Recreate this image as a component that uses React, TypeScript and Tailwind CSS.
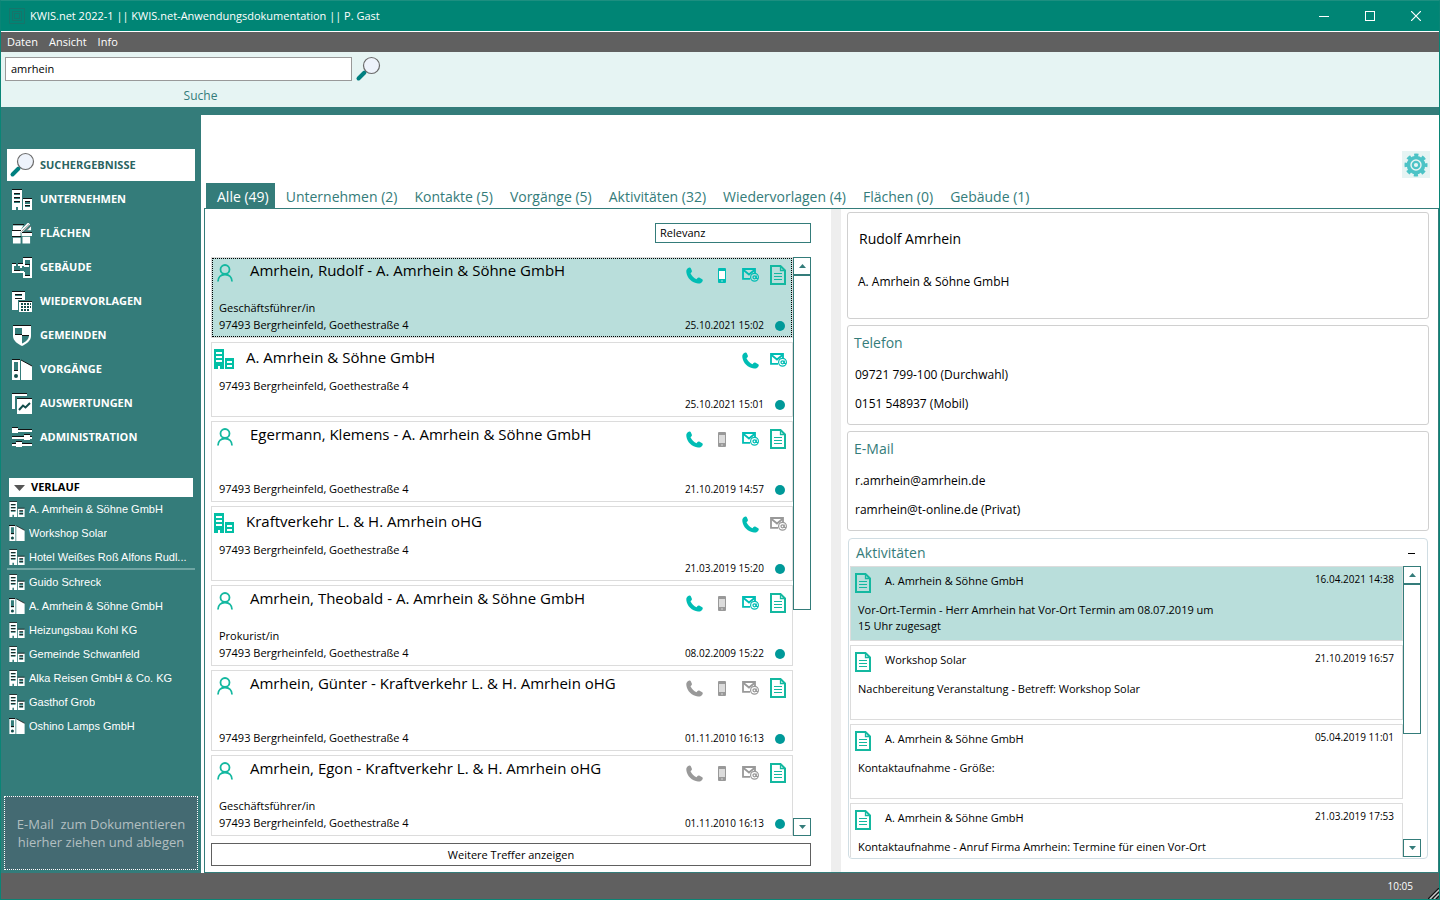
import { useState } from "react";
import type { ReactNode } from "react";

type IconProps = { className?: string };

type Hit = {
  id: number;
  kind: "person" | "company";
  title: string;
  role?: string;
  date: string;
  phone: boolean;
  mobile?: boolean;
  mail: boolean;
};

const address = "97493 Bergrheinfeld, Goethestraße 4";

const hits: Hit[] = [
  { id: 1, kind: "person", title: "Amrhein, Rudolf - A. Amrhein & Söhne GmbH", role: "Geschäftsführer/in", date: "25.10.2021 15:02", phone: true, mobile: true, mail: true },
  { id: 2, kind: "company", title: "A. Amrhein & Söhne GmbH", date: "25.10.2021 15:01", phone: true, mail: true },
  { id: 3, kind: "person", title: "Egermann, Klemens - A. Amrhein & Söhne GmbH", date: "21.10.2019 14:57", phone: true, mobile: false, mail: true },
  { id: 4, kind: "company", title: "Kraftverkehr L. & H. Amrhein oHG", date: "21.03.2019 15:20", phone: true, mail: false },
  { id: 5, kind: "person", title: "Amrhein, Theobald - A. Amrhein & Söhne GmbH", role: "Prokurist/in", date: "08.02.2009 15:22", phone: true, mobile: false, mail: true },
  { id: 6, kind: "person", title: "Amrhein, Günter - Kraftverkehr L. & H. Amrhein oHG", date: "01.11.2010 16:13", phone: false, mobile: false, mail: false },
  { id: 7, kind: "person", title: "Amrhein, Egon - Kraftverkehr L. & H. Amrhein oHG", role: "Geschäftsführer/in", date: "01.11.2010 16:13", phone: false, mobile: false, mail: false },
];

const activities = [
  { id: 1, company: "A. Amrhein & Söhne GmbH", date: "16.04.2021 14:38", text: "Vor-Ort-Termin - Herr Amrhein hat Vor-Ort Termin am 08.07.2019 um 15 Uhr zugesagt" },
  { id: 2, company: "Workshop Solar", date: "21.10.2019 16:57", text: "Nachbereitung Veranstaltung - Betreff: Workshop Solar" },
  { id: 3, company: "A. Amrhein & Söhne GmbH", date: "05.04.2019 11:01", text: "Kontaktaufnahme - Größe:" },
  { id: 4, company: "A. Amrhein & Söhne GmbH", date: "21.03.2019 17:53", text: "Kontaktaufnahme - Anruf Firma Amrhein: Termine für einen Vor-Ort" },
];

const tabs = [
  "Alle (49)",
  "Unternehmen (2)",
  "Kontakte (5)",
  "Vorgänge (5)",
  "Aktivitäten (32)",
  "Wiedervorlagen (4)",
  "Flächen (0)",
  "Gebäude (1)",
];

const MagnifierIcon = ({ className }: IconProps) => (
  <svg viewBox="0 0 26 26" className={className} aria-hidden="true">
    <path d="M3.5 22.5 9.5 16.5" stroke="#008080" strokeWidth="4" strokeLinecap="round" />
    <circle cx="16.5" cy="9.5" r="8" fill="#eef3fb" stroke="#6b6b6b" strokeWidth="1.2" />
  </svg>
);

const BuildingIcon = ({ className }: IconProps) => (
  <svg viewBox="0 0 20 21" className={className} aria-hidden="true">
    <path fill="#fff" fillRule="evenodd" d="M0 1H10V21H6V18H4V21H0ZM2 4V6H8V4ZM2 8V10H8V8ZM2 12V14H8V12ZM11 10H20V21H11ZM13 13V15H18V13ZM13 16V18H18V16Z" />
    <path fill="#111" d="M0 0H10V1H0ZM2 4H8V5H2ZM2 8H8V9H2ZM2 12H8V13H2ZM11 9H20V10H11ZM13 12H18V13H13ZM13 16H18V17H13Z" />
  </svg>
);

const AreaIcon = ({ className }: IconProps) => (
  <svg viewBox="0 0 21 21" className={className} aria-hidden="true">
    <path fill="#fff" d="M1 2H12L9 7H1ZM0 8H9V13H0ZM10 9H21V13H10ZM15 7 20 3V7ZM1 15H9V21H1ZM11 14H19V21H11Z" />
    <path stroke="#fff" strokeWidth="3" d="M9 9 18 0" />
    <path stroke="#777" d="M10 8.500 18 1M14 9 20 2.500" />
    <path fill="#111" shapeRendering="crispEdges" d="M1 1H13V2H1ZM0 7H9V8H0ZM11 9H21V10H11ZM0 13H9V14H0Z" />
  </svg>
);

const FloorPlanIcon = ({ className }: IconProps) => (
  <svg viewBox="0 0 20 21" className={className} shapeRendering="crispEdges" aria-hidden="true">
    <path fill="none" stroke="#fff" strokeWidth="2" d="M4 8H1V15H12M6 8H12V2H19V20H12V15M12 9H17M9 8V11" />
    <path fill="#111" d="M11 0H20V1H11ZM0 6H4V7H0ZM6 6H11V7H6ZM13 7H18V8H13ZM2 13H8V14H2ZM13 18H18V19H13Z" />
  </svg>
);

const CalendarDocIcon = ({ className }: IconProps) => (
  <svg viewBox="0 0 20 21" className={className} shapeRendering="crispEdges" aria-hidden="true">
    <path fill="#fff" fillRule="evenodd" d="M0 1H13V9H6V19H0ZM3 3V5H10V3ZM3 7V8H10V7Z" />
    <path fill="#fff" d="M7 11H20V21H7Z" />
    <path fill="#111" d="M0 0H13V1H0ZM3 3H10V4H3ZM3 7H10V8H3ZM7 10H20V11H7Z" />
    <path fill="#134d4b" d="M9 12h2v2h-2zM12 12h2v2h-2zM15 12h2v2h-2zM9 15h2v2h-2zM12 15h2v2h-2zM15 15h2v2h-2zM9 18h2v2h-2zM12 18h2v2h-2zM15 18h2v2h-2zM18 12h1v2h-1zM18 15h1v2h-1z" />
  </svg>
);

const ShieldIcon = ({ className }: IconProps) => (
  <svg viewBox="0 0 20 21" className={className} aria-hidden="true">
    <path fill="#fff" d="M1 1H19V11C19 16 14 19 10 21C6 19 1 16 1 11Z" />
    <path fill="#347c7a" d="M3 3H10V10H3ZM10 10H17C17 15 13 17 10 18.500Z" />
    <path fill="#111" shapeRendering="crispEdges" d="M1 0H19V1H1ZM3 9H10V10H3ZM10 10H17V11H10Z" />
  </svg>
);

const BinderIcon = ({ className }: IconProps) => (
  <svg viewBox="0 0 20 21" className={className} aria-hidden="true">
    <path fill="#fff" fillRule="evenodd" d="M0 1H8V21H0ZM2 3V12H6V3ZM9 1 20 7V21H9Z" />
    <circle cx="4" cy="17" r="2" fill="#134d4b" />
    <path fill="#111" shapeRendering="crispEdges" d="M0 0H8V1H0ZM2 11H6V12H2Z" />
    <path stroke="#111" fill="none" d="M9 1 20 7" />
  </svg>
);

const ReportIcon = ({ className }: IconProps) => (
  <svg viewBox="0 0 20 21" className={className} aria-hidden="true">
    <path fill="#fff" d="M0 1H15V3H3V16H0ZM5 6H20V21H5Z" />
    <path fill="#111" shapeRendering="crispEdges" d="M0 0H15V1H0ZM5 5H20V6H5Z" />
    <path fill="none" stroke="#134d4b" strokeWidth="2" d="M7 17 11 12.500 13.500 14.500 18 10" />
  </svg>
);

const SlidersIcon = ({ className }: IconProps) => (
  <svg viewBox="0 0 20 21" className={className} shapeRendering="crispEdges" aria-hidden="true">
    <path fill="#fff" d="M0 3H20V5H0ZM0 1H6V6H0ZM0 10H20V12H0ZM12 8H18V13H12ZM0 17H20V19H0ZM4 15H10V20H4Z" />
    <path fill="#111" d="M0 0H6V1H0ZM6 2H20V3H6ZM0 9H12V10H0ZM12 7H18V8H12ZM18 9H20V10H18ZM4 14H10V15H4ZM0 16H4V17H0ZM10 16H20V17H10Z" />
  </svg>
);

const PersonIcon = ({ className }: IconProps) => (
  <svg viewBox="0 0 16 18" className={className} fill="none" stroke="#14b8a0" strokeWidth="1.800" aria-hidden="true">
    <circle cx="8" cy="5.500" r="4.500" />
    <path d="M1 17.500C1 13 4 10.500 8 10.500S15 13 15 17.500" />
  </svg>
);

const CompanyIcon = ({ className }: IconProps) => (
  <svg viewBox="0 0 20 20" className={className} shapeRendering="crispEdges" aria-hidden="true">
    <path fill="#02bfa5" fillRule="evenodd" d="M0 0H10V20H6V17H4V20H0ZM2 3V5H8V3ZM2 7V9H8V7ZM2 11V13H8V11ZM11 9H20V20H11ZM13 12V14H18V12ZM13 16V18H18V16Z" />
  </svg>
);

const PhoneIcon = ({ className }: IconProps) => (
  <svg viewBox="0 0 17 17" className={className} aria-hidden="true">
    <path fill="currentColor" d="M3.500 0.500C1.500 0.800 0 2.500 0.300 5C1 11 6 16 12 16.500C14.500 16.700 16 15.700 16.700 13.700C17 12.800 16.500 12.300 15.800 11.900L13.200 10.600C12.500 10.300 12 10.500 11.500 11L10.500 12.200C8 11.200 5.500 8.700 4.500 6.200L5.500 5.300C6 4.800 6.100 4.200 5.800 3.500L4.800 1.200C4.500 0.600 4.200 0.400 3.500 0.500Z" />
  </svg>
);

const MobileIcon = ({ className, on }: IconProps & { on: boolean }) => (
  <svg viewBox="0 0 8 15" className={className} aria-hidden="true">
    <rect width="8" height="15" rx="1" fill="currentColor" />
    <path fill={on ? "#fff" : "#dcdcdc"} d="M1 3H7V11H1Z" />
    <path fill="#fff" opacity=".6" d="M3 12.500H5V13.500H3Z" />
  </svg>
);

const MailIcon = ({ className }: IconProps) => (
  <svg viewBox="0 0 17 14" className={className} fill="none" stroke="currentColor" aria-hidden="true">
    <path strokeWidth="1.800" d="M8 10.800H1V1H13V5" />
    <path strokeWidth="1.800" d="M1.500 2 7 6.500 12.500 2" />
    <circle cx="12.500" cy="9.300" r="3.900" strokeWidth="1.200" />
    <circle cx="12.500" cy="9.300" r="1.500" strokeWidth="1.300" />
    <path strokeWidth="1.100" d="M14.300 7.500V10.500H16" />
  </svg>
);

const DocIcon = ({ className }: IconProps) => (
  <svg viewBox="0 0 16 20" className={className} fill="none" stroke="#14b8a0" aria-hidden="true">
    <path strokeWidth="2" d="M1 1H10.500L15 5.500V19H1Z" />
    <path strokeWidth="1.300" d="M10.500 1V5.500H15" />
    <path strokeWidth="1" shapeRendering="crispEdges" d="M4 8.500H12M4 11.500H12M4 14.500H12" />
  </svg>
);

const GearIcon = ({ className }: IconProps) => (
  <svg viewBox="0 0 24 24" className={className} fill="none" stroke="#4cc3c6" aria-hidden="true">
    <circle cx="12" cy="12" r="9.500" strokeWidth="4" strokeDasharray="4 3.460" strokeDashoffset="2" />
    <circle cx="12" cy="12" r="7.500" strokeWidth="3.600" />
    <circle cx="12" cy="12" r="3.200" strokeWidth="2.200" />
  </svg>
);

const navItems = [
  { label: "UNTERNEHMEN", icon: BuildingIcon },
  { label: "FLÄCHEN", icon: AreaIcon },
  { label: "GEBÄUDE", icon: FloorPlanIcon },
  { label: "WIEDERVORLAGEN", icon: CalendarDocIcon },
  { label: "GEMEINDEN", icon: ShieldIcon },
  { label: "VORGÄNGE", icon: BinderIcon },
  { label: "AUSWERTUNGEN", icon: ReportIcon },
  { label: "ADMINISTRATION", icon: SlidersIcon },
];

const pinned = [
  { label: "A. Amrhein & Söhne GmbH", icon: BuildingIcon },
  { label: "Workshop Solar", icon: BinderIcon },
  { label: "Hotel Weißes Roß Alfons Rudl...", icon: BuildingIcon },
];

const recent = [
  { label: "Guido Schreck", icon: BuildingIcon },
  { label: "A. Amrhein & Söhne GmbH", icon: BinderIcon },
  { label: "Heizungsbau Kohl KG", icon: BuildingIcon },
  { label: "Gemeinde Schwanfeld", icon: BuildingIcon },
  { label: "Alka Reisen GmbH & Co. KG", icon: BuildingIcon },
  { label: "Gasthof Grob", icon: BuildingIcon },
  { label: "Oshino Lamps GmbH", icon: BinderIcon },
];

const TitleBar = () => (
  <header className="flex h-[31px] shrink-0 items-center border-b border-white bg-[#008575] pl-2 text-white">
    <svg viewBox="0 0 16 16" className="size-4" fill="none" stroke="#17746a" aria-hidden="true">
      <path d="M.5 .5H15.500V15.500H.5ZM3.500 3.500H12.500V12.500H3.500ZM5.500 5.500H10.500V10.500H5.500Z" />
    </svg>
    <h1 className="ml-[5px] flex-1 text-[11px]">KWIS.net 2022-1 || KWIS.net-Anwendungsdokumentation || P. Gast</h1>
    <button aria-label="Minimieren" className="flex h-full w-[46px] items-center justify-center">
      <span className="w-[10px] border-t border-white" />
    </button>
    <button aria-label="Maximieren" className="flex h-full w-[46px] items-center justify-center">
      <span className="size-[10px] border border-white" />
    </button>
    <button aria-label="Schließen" className="flex h-full w-[46px] items-center justify-center">
      <svg viewBox="0 0 10 10" className="size-[10px]" stroke="#fff" strokeWidth="1.200" aria-hidden="true">
        <path d="M0 0 10 10M10 0 0 10" />
      </svg>
    </button>
  </header>
);

const HistoryList = ({ items }: { items: typeof recent }) => (
  <ul>
    {items.map(({ label, icon: Icon }) => (
      <li key={label}>
        <a href="#" className="flex h-6 items-center gap-1 pl-2 pr-2">
          <Icon className="h-4 w-4 shrink-0" />
          <span className="truncate font-['Liberation_Sans',sans-serif] text-[11px] text-white">{label}</span>
        </a>
      </li>
    ))}
  </ul>
);

const Sidebar = () => (
  <aside className="flex w-[200px] shrink-0 flex-col pt-[42px]">
    <nav className="flex flex-col gap-[2px] px-[6px]">
      <a href="#" className="flex h-8 items-center gap-[5px] bg-white pl-[2px] text-[11px] font-bold text-[#2a6462]">
        <MagnifierIcon className="size-[26px]" />
        SUCHERGEBNISSE
      </a>
      {navItems.map(({ label, icon: Icon }) => (
        <a href="#" key={label} className="flex h-8 items-center gap-2 pl-[5px] text-[11px] font-bold text-white">
          <Icon className="h-[21px] w-5" />
          {label}
        </a>
      ))}
    </nav>
    <button className="mx-2 mt-[25px] flex h-[19px] items-center gap-[6px] bg-white pl-[5px] text-[11px] font-bold text-black">
      <svg viewBox="0 0 11 6" className="h-[6px] w-[11px]" aria-hidden="true">
        <path fill="#555" d="M0 0H11L5.500 6Z" />
      </svg>
      VERLAUF
    </button>
    <HistoryList items={pinned} />
    <hr className="mx-[6px] -mt-px border-t-2 border-[#6fa5a3]" />
    <HistoryList items={recent} />
    <div className="mx-[3px] mt-auto mb-[3px] flex h-[74px] items-center justify-center border border-dotted border-white bg-[#446a72] text-center text-[13px] leading-[18px] whitespace-pre-line text-[#b3bfc1]">
      {"E-Mail\u00a0 zum Dokumentieren\nhierher ziehen und ablegen"}
    </div>
  </aside>
);

const ScrollBar = ({ thumb }: { thumb: string }) => (
  <div className="flex w-[18px] shrink-0 flex-col">
    <button aria-label="Nach oben" className="flex h-[18px] w-[18px] shrink-0 items-center justify-center border border-[#347c7a]">
      <svg viewBox="0 0 7 4" className="h-1 w-[7px]" aria-hidden="true">
        <path fill="#347c7a" d="M3.500 0 7 4H0Z" />
      </svg>
    </button>
    <div className={`border border-[#347c7a] ${thumb}`} />
    <button aria-label="Nach unten" className="mt-auto flex h-[18px] w-[18px] shrink-0 items-center justify-center border border-[#347c7a]">
      <svg viewBox="0 0 7 4" className="h-1 w-[7px]" aria-hidden="true">
        <path fill="#347c7a" d="M0 0H7L3.500 4Z" />
      </svg>
    </button>
  </div>
);

const IconCell = ({ on = true, children }: { on?: boolean; children: ReactNode }) => (
  <span className={`flex h-5 w-7 items-center justify-center ${on ? "text-[#00bdb4]" : "text-[#999]"}`}>{children}</span>
);

const HitCard = ({ hit, selected, onSelect }: { hit: Hit; selected: boolean; onSelect: () => void }) => {
  const person = hit.kind === "person";
  return (
    <li
      onClick={onSelect}
      className={`flex shrink-0 justify-between border border-[#dcdcdc] ${person ? "h-[81px]" : "h-[75px]"} ${
        selected ? "bg-[#b9dedb] outline-1 -outline-offset-2 outline-dotted outline-black" : "bg-white"
      }`}
    >
      <div className="flex flex-col">
        <div className={`flex items-start ${person ? "gap-[17px] pt-[1px] pl-[5px]" : "gap-3 pt-[3px] pl-[2px]"}`}>
          {person ? <PersonIcon className="mt-[5px] h-[18px] w-4" /> : <CompanyIcon className="mt-[3px] h-5 w-5" />}
          <h3 className="text-[15px] leading-[22px]">{hit.title}</h3>
        </div>
        <div className={`mt-auto pl-[7px] text-[11px] leading-[17px] ${person ? "pb-1" : "pb-[22px]"}`}>
          {hit.role && <p>{hit.role}</p>}
          <p>{address}</p>
        </div>
      </div>
      <div className="flex flex-col items-end justify-between pt-[7px] pb-1">
        <div className="flex">
          <IconCell on={hit.phone}>
            <PhoneIcon className="size-[17px]" />
          </IconCell>
          {person && (
            <IconCell on={hit.mobile}>
              <MobileIcon on={!!hit.mobile} className="h-[15px] w-2" />
            </IconCell>
          )}
          <IconCell on={hit.mail}>
            <MailIcon className="h-[14px] w-[17px]" />
          </IconCell>
          {person && (
            <IconCell>
              <DocIcon className="h-5 w-4" />
            </IconCell>
          )}
        </div>
        <div className="flex items-center gap-[11px] pr-[7px]">
          <time className="text-[10px] leading-[15px]">{hit.date}</time>
          <span className="size-[10px] rounded-full bg-[#009999]" />
        </div>
      </div>
    </li>
  );
};

const Panel = ({ title, lines }: { title: string; lines: string[] }) => (
  <section className="shrink-0 rounded-[3px] border border-[#d0d0d0] pt-[5px] pr-[7px] pb-[6px] pl-[6px]">
    <h2 className="text-sm leading-6 text-[#347c7a]">{title}</h2>
    <div className="pt-[5px] pl-[1px] text-[12px] leading-[29px]">
      {lines.map((line) => (
        <p key={line}>{line}</p>
      ))}
    </div>
  </section>
);

const App = () => {
  const [tab, setTab] = useState(0);
  const [query, setQuery] = useState("amrhein");
  const [selected, setSelected] = useState(1);

  return (
    <div className="flex h-screen flex-col border border-t-[#1d8f80] border-[#0a8576] bg-[#347c7a] font-['Open_Sans','Noto_Sans',sans-serif] text-black">
      <TitleBar />
      <nav className="flex h-5 shrink-0 items-center gap-[11px] bg-[#606060] pl-[6px] text-[11px] text-white">
        <button>Daten</button>
        <button>Ansicht</button>
        <button>Info</button>
      </nav>
      <form className="shrink-0 bg-[#e6f4f3] pt-1 pl-1" onSubmit={(e) => e.preventDefault()}>
        <div className="flex items-center gap-[3px]">
          <input
            id="suche"
            value={query}
            onChange={(e) => setQuery(e.target.value)}
            className="h-6 w-[347px] border border-[#999] bg-white px-[5px] pb-[2px] text-[11px] outline-none"
          />
          <button aria-label="Suchen">
            <MagnifierIcon className="size-[26px]" />
          </button>
        </div>
        <label htmlFor="suche" className="block w-[391px] pt-[5px] pb-[2px] text-center text-[12px] leading-[18px] text-[#347c7a]">
          Suche
        </label>
      </form>

      <div className="flex min-h-0 flex-1">
        <Sidebar />
        <main className="mt-2 flex min-w-0 flex-1 flex-col bg-white pl-[3px]">
          <div className="flex shrink-0 justify-end pt-9 pr-[9px]">
            <button aria-label="Einstellungen" className="flex h-[27px] w-7 items-center justify-center bg-[#e6f4f3]">
              <GearIcon className="size-6" />
            </button>
          </div>
          <div role="tablist" className="mt-[5px] flex h-[25px] shrink-0 pl-[2px] text-[14px]">
            {tabs.map((label, i) => (
              <button
                key={label}
                role="tab"
                aria-selected={tab === i}
                onClick={() => setTab(i)}
                className={`pt-[2px] pr-[6px] pl-[11px] ${tab === i ? "bg-[#347c7a] text-white" : "text-[#347c7a]"}`}
              >
                {label}
              </button>
            ))}
          </div>

          <div className="flex min-h-0 flex-1 border border-[#347c7a]">
            <section className="flex w-[626px] shrink-0 flex-col pt-[14px] pr-5 pb-[6px] pl-[6px]">
              <select aria-label="Sortierung" className="h-5 w-[156px] shrink-0 appearance-none self-end border border-[#347c7a] bg-white px-1 text-[11px]">
                <option>Relevanz</option>
                <option>Datum</option>
              </select>
              <div className="mt-[14px] flex min-h-0 flex-1">
                <ul className="flex min-w-0 flex-1 flex-col gap-1 overflow-hidden">
                  {hits.map((hit) => (
                    <HitCard key={hit.id} hit={hit} selected={hit.id === selected} onSelect={() => setSelected(hit.id)} />
                  ))}
                </ul>
                <ScrollBar thumb="h-[335px]" />
              </div>
              <button className="mt-[7px] h-[23px] shrink-0 border border-[#606060] pt-px text-[11px]">Weitere Treffer anzeigen</button>
            </section>

            <div className="w-[10px] shrink-0 bg-[#eee]" />

            <section className="flex min-w-0 flex-1 flex-col gap-[6px] pt-[3px] pr-[9px] pb-[13px] pl-[6px]">
              <div className="h-[107px] shrink-0 rounded-[3px] border border-[#d0d0d0] pt-[14px] pl-[10px]">
                <h2 className="pl-[1px] text-sm leading-6">Rudolf Amrhein</h2>
                <p className="pt-[21px] text-[12px] leading-5">A. Amrhein &amp; Söhne GmbH</p>
              </div>
              <Panel title="Telefon" lines={["09721 799-100 (Durchwahl)", "0151 548937 (Mobil)"]} />
              <Panel title="E-Mail" lines={["r.amrhein@amrhein.de", "ramrhein@t-online.de (Privat)"]} />
              <section className="mx-[1px] mt-[1px] flex min-h-0 flex-1 flex-col rounded-[4px] border border-[#d0dde3]">
                <div className="flex h-[27px] shrink-0 items-center justify-between pt-px pr-3 pl-[7px]">
                  <h2 className="text-sm leading-6 text-[#347c7a]">Aktivitäten</h2>
                  <button aria-label="Einklappen" className="flex h-4 items-center">
                    <span className="w-[7px] border-t border-black" />
                  </button>
                </div>
                <div className="flex min-h-0 flex-1 pr-[6px] pb-px pl-[1px]">
                  <ul className="flex min-w-0 flex-1 flex-col gap-1 overflow-hidden">
                    {activities.map((item, i) => (
                      <li key={item.id} className={`h-[75px] shrink-0 border border-[#dcdcdc] ${i === 0 ? "bg-[#b9dedb]" : ""}`}>
                        <div className="flex items-start pt-[5px] pr-2 pl-1">
                          <DocIcon className="mt-[1px] h-5 w-4" />
                          <h3 className="ml-[14px] flex-1 text-[11px] leading-[18px]">{item.company}</h3>
                          <time className="text-[10px] leading-[14px]">{item.date}</time>
                        </div>
                        <p className="max-w-[375px] pt-[9px] pl-[7px] text-[11px] leading-4">{item.text}</p>
                      </li>
                    ))}
                  </ul>
                  <ScrollBar thumb="h-[150px]" />
                </div>
              </section>
            </section>
          </div>
        </main>
      </div>

      <footer className="flex h-[26px] shrink-0 items-center justify-end bg-[#606060] text-[10px] text-white">
        <time className="pr-[15px]">10:05</time>
        <svg viewBox="0 0 11 11" className="size-[11px] self-end" strokeWidth="1.200" aria-hidden="true">
          <path stroke="#111" d="M0 11 11 0M4 11 11 4M8 11 11 8" />
          <path stroke="#ccc" d="M2 11 11 2M6 11 11 6" />
        </svg>
      </footer>
    </div>
  );
};

export default App;
